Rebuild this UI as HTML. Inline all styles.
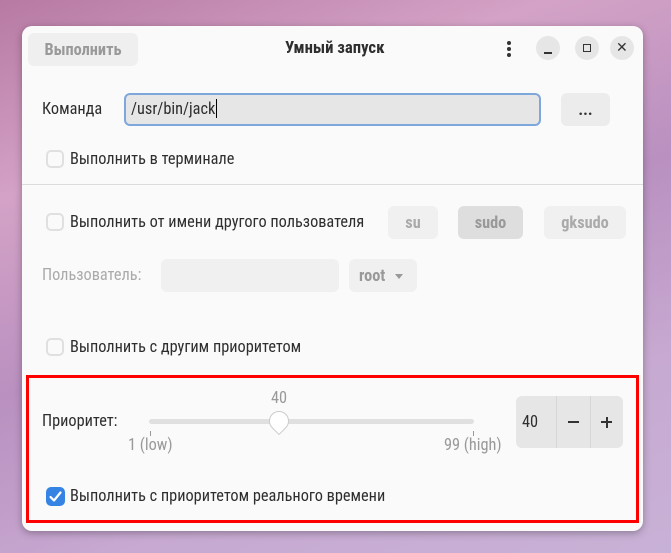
<!DOCTYPE html>
<html><head><meta charset="utf-8"><style>
*{margin:0;padding:0;box-sizing:border-box}
body{width:671px;height:553px;overflow:hidden;position:relative;font-family:"Roboto Condensed","Liberation Sans Narrow","Liberation Sans",sans-serif;font-size:16.3px;color:#2e2e2e;
background:linear-gradient(160deg,#b77aa3 0%,#d4a2c6 25%,#b990c0 50%,#c7a9d1 75%,#c8b1d6 100%)}
.win{position:absolute;left:22px;top:26px;width:621px;height:505px;background:#fafafa;border-radius:10px;box-shadow:0 2px 8px rgba(0,0,0,.3)}
.a{position:absolute}
.btn{position:absolute;background:#ececec;border-radius:6px;color:#999;font-weight:bold;display:flex;align-items:center;justify-content:center}
.cb{position:absolute;width:18px;height:18px;border:2px solid #e0e0e0;border-radius:5px;background:#fafafa}
.t{position:absolute;line-height:18px;white-space:nowrap}
.circ{position:absolute;width:24px;height:24px;border-radius:50%;background:#e6e6e6}
</style></head><body>
<div class="win"></div>
<div class="btn" style="left:28px;top:33px;width:110px;height:33px;background:#efefef">Выполнить</div>
<div class="t" style="left:285px;top:40px;font-weight:bold;font-size:16.7px">Умный запуск</div>
<div class="a" style="left:507px;top:41px;width:4px;height:4px;border-radius:50%;background:#333;box-shadow:0 6px 0 #333,0 12px 0 #333"></div>
<div class="circ" style="left:536px;top:36px"></div><div class="a" style="left:544px;top:52px;width:8px;height:2px;background:#333"></div>
<div class="circ" style="left:575px;top:36px"></div><div class="a" style="left:583px;top:44px;width:8px;height:8px;border:1.5px solid #333"></div>
<div class="circ" style="left:610px;top:36px"></div><div class="t" style="left:616px;top:39px;font-size:14px;color:#333">✕</div>
<div class="t" style="left:42px;top:100px">Команда</div>
<div class="a" style="left:124px;top:93px;width:417px;height:33px;background:#e6e6e6;border:2px solid #7ea7dc;border-radius:6px"></div>
<div class="t" style="left:131px;top:100px">/usr/bin/jack<span style="border-left:1px solid #000;margin-left:1px"></span></div>
<div class="btn" style="left:561px;top:93px;width:49px;height:33px;color:#333">...</div>
<div class="cb" style="left:46px;top:150px"></div><div class="t" style="left:70px;top:150px">Выполнить в терминале</div>
<div class="a" style="left:22px;top:184px;width:621px;height:1px;background:#dcdcdc"></div>
<div class="cb" style="left:46px;top:213px"></div><div class="t" style="left:70px;top:213px">Выполнить от имени другого пользователя</div>
<div class="btn" style="left:388px;top:206px;width:50px;height:33px;background:#f0f0f0;color:#aaa">su</div>
<div class="btn" style="left:458px;top:206px;width:65px;height:33px;background:#dedede;color:#999">sudo</div>
<div class="btn" style="left:544px;top:206px;width:82px;height:33px;background:#f0f0f0;color:#aaa">gksudo</div>
<div class="t" style="left:42px;top:266px;color:#aaa">Пользователь:</div>
<div class="a" style="left:161px;top:259px;width:178px;height:33px;background:#f0f0f0;border-radius:6px"></div>
<div class="btn" style="left:349px;top:259px;width:68px;height:33px;background:#f0f0f0;color:#999;justify-content:flex-start;padding-left:10px">root<span style="margin-left:10px;border:4px solid transparent;border-top:5px solid #999;margin-top:5px"></span></div>
<div class="cb" style="left:46px;top:338px"></div><div class="t" style="left:70px;top:338px">Выполнить с другим приоритетом</div>
<div class="a" style="left:26px;top:375px;width:613px;height:148px;border:3px solid #f00"></div>
<div class="t" style="left:42px;top:412px">Приоритет:</div>
<div class="t" style="left:271px;top:389px;color:#999">40</div>
<div class="a" style="left:149px;top:419px;width:325px;height:5px;background:#e0e0e0;border-radius:3px"></div>
<div class="a" style="left:269px;top:411px;width:20px;height:20px;background:#fff;border:1px solid #ccc;border-radius:50% 50% 50% 0;transform:rotate(-45deg)"></div>
<div class="a" style="left:150px;top:431px;width:1px;height:5px;background:#999"></div>
<div class="a" style="left:473px;top:431px;width:1px;height:5px;background:#999"></div>
<div class="t" style="left:128px;top:436px;color:#999">1 (low)</div>
<div class="t" style="left:444px;top:436px;color:#999">99 (high)</div>
<div class="a" style="left:516px;top:396px;width:107px;height:52px;background:#e6e6e6;border-radius:6px"></div>
<div class="a" style="left:556px;top:396px;width:1px;height:52px;background:#d6d6d6"></div>
<div class="a" style="left:590px;top:396px;width:1px;height:52px;background:#d6d6d6"></div>
<div class="t" style="left:522px;top:413px">40</div>
<div class="a" style="left:568px;top:421px;width:11px;height:2px;background:#333"></div>
<div class="a" style="left:601px;top:421px;width:11px;height:2px;background:#333"></div>
<div class="a" style="left:605.5px;top:416.5px;width:2px;height:11px;background:#333"></div>
<div class="a" style="left:46px;top:487px;width:19px;height:19px;background:#3584e4;border-radius:5px"></div>
<svg class="a" style="left:46px;top:487px" width="19" height="19"><path d="M4.5 10l3.5 3.5 6.5-8" stroke="#fff" stroke-width="2.2" fill="none" stroke-linecap="round" stroke-linejoin="round"/></svg>
<div class="t" style="left:70px;top:487px">Выполнить с приоритетом реального времени</div>
</body></html>
